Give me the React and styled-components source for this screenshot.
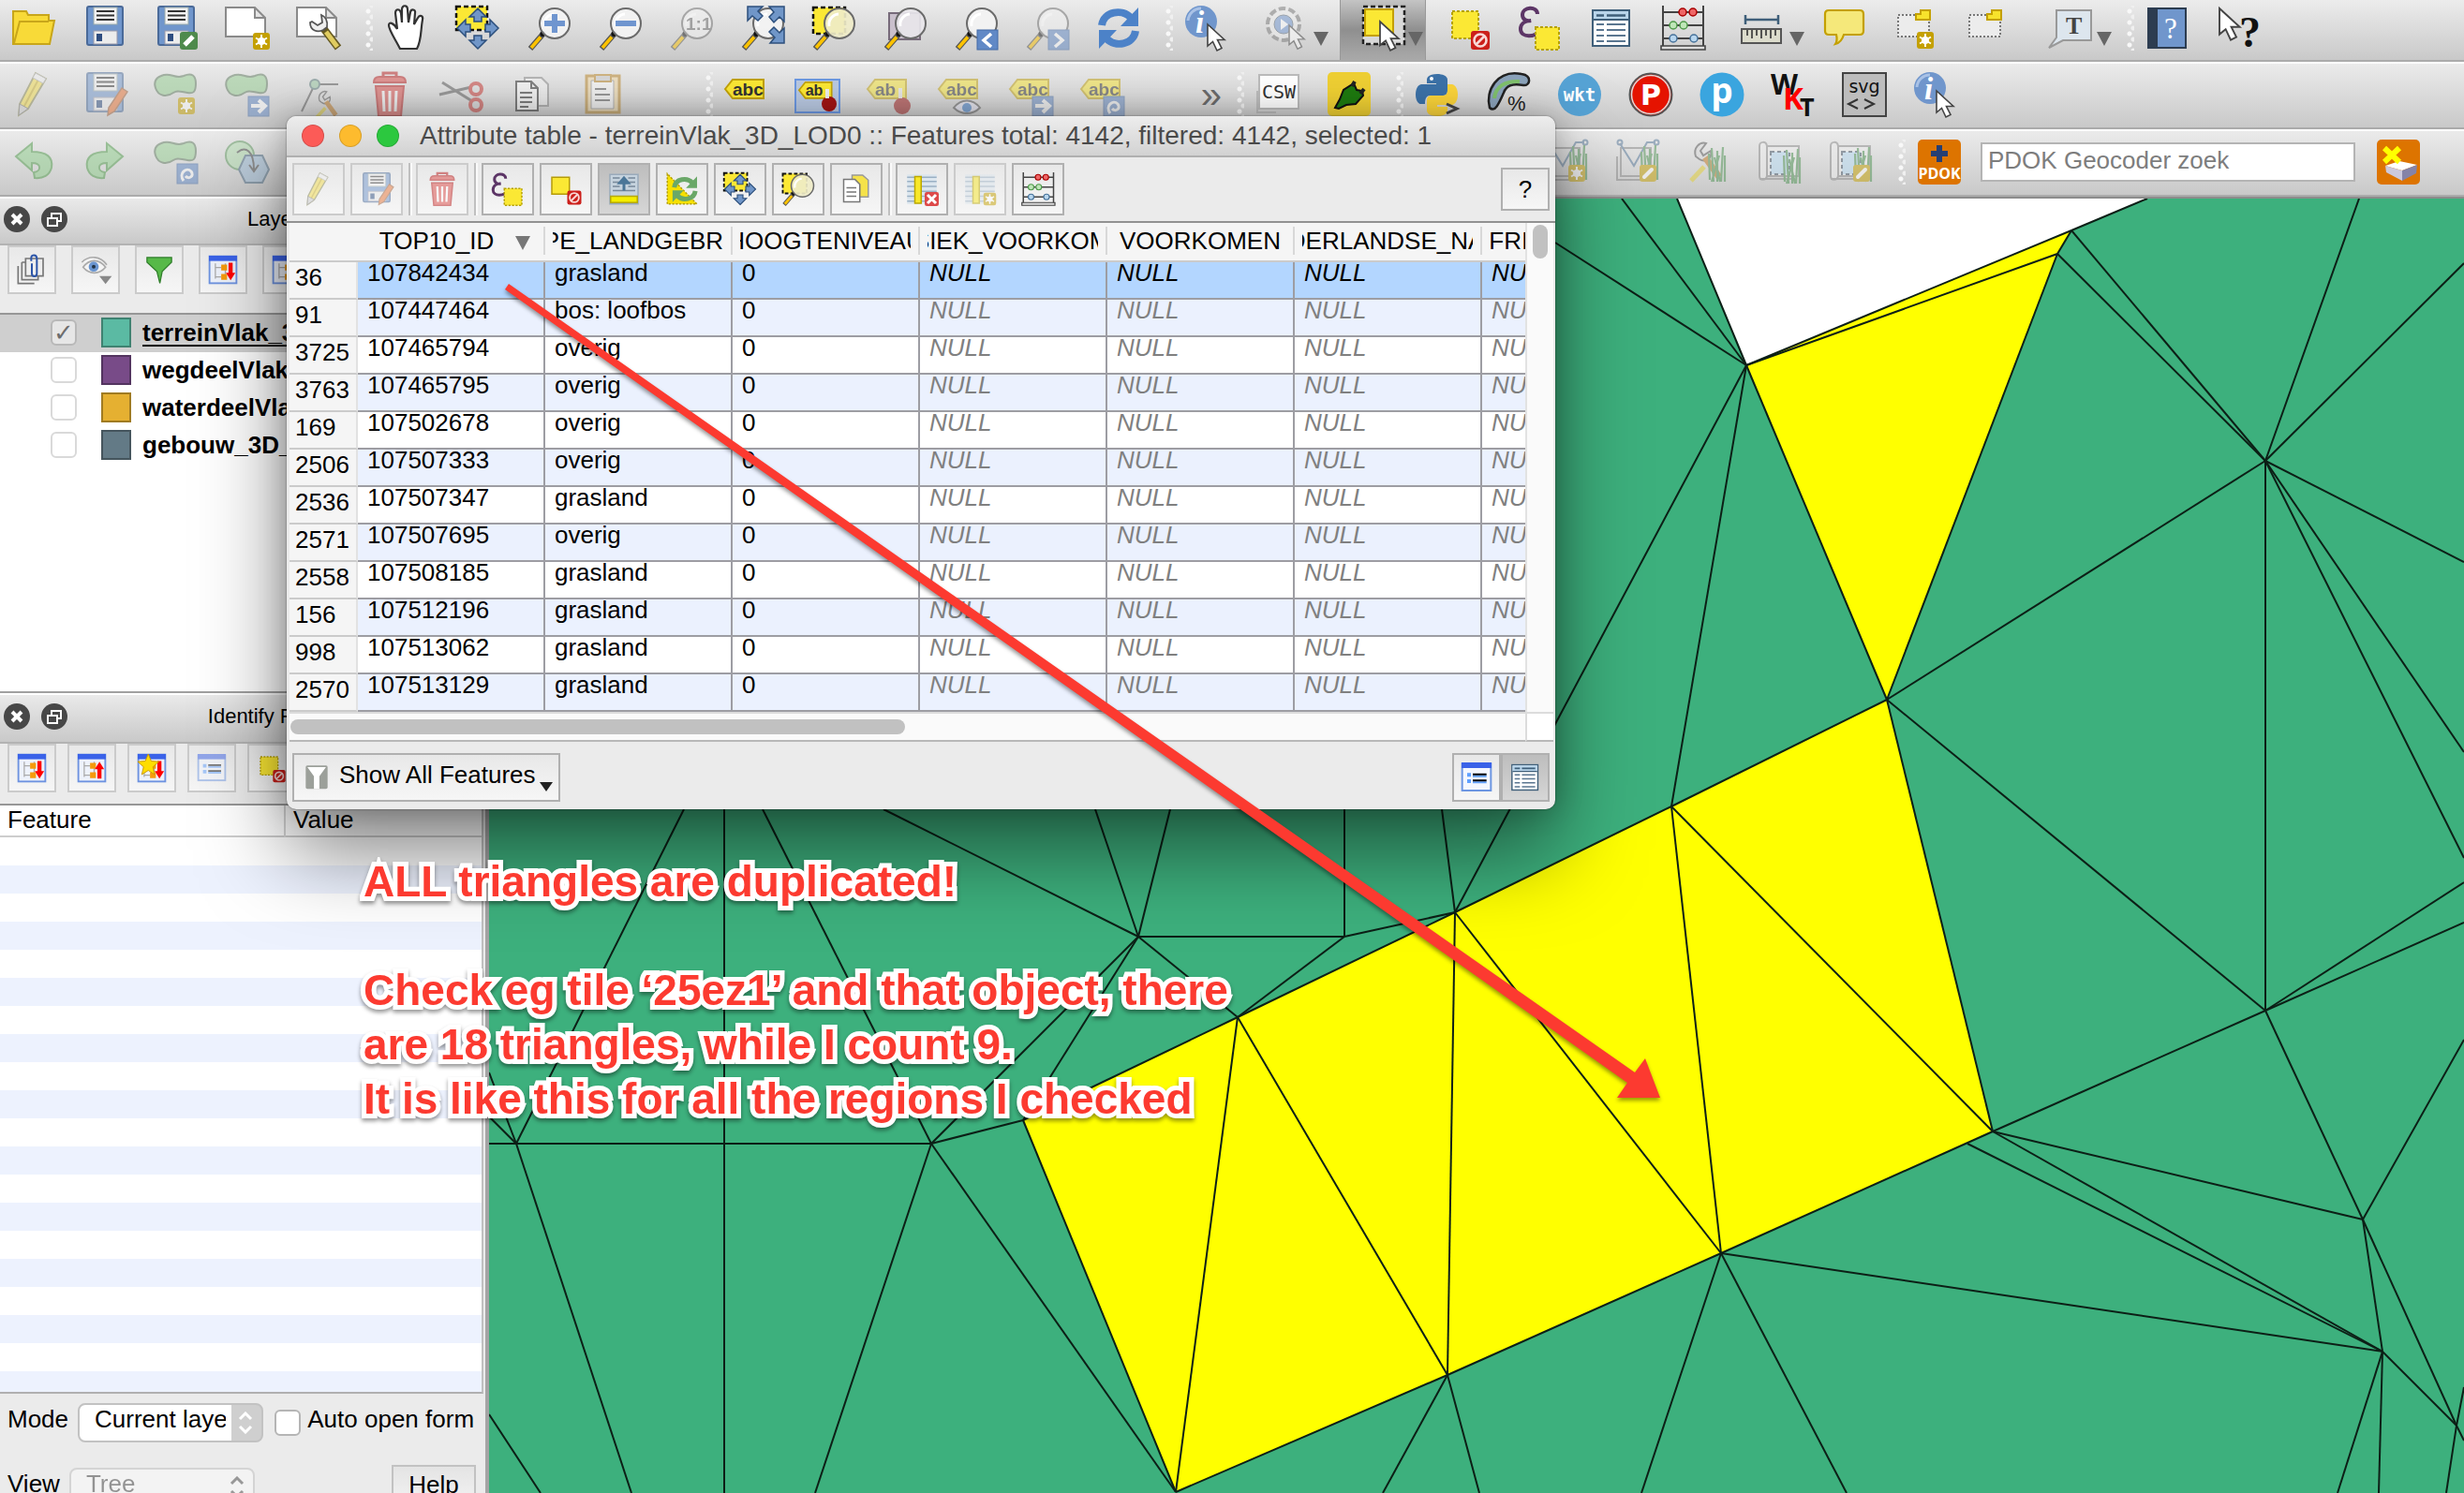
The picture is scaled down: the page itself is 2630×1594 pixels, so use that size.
import React from "react";
import styled, { createGlobalStyle, css } from "styled-components";

const sans = `"Liberation Sans", Arial, Helvetica, sans-serif`;

const GlobalStyle = createGlobalStyle`
  * { box-sizing: border-box; }
  body { margin: 0; font-family: ${sans}; font-size: 26px; color: #000; overflow: hidden; }
  button, input, select { font: inherit; color: inherit; margin: 0; }
`;

/* ---------- icon drawing helpers ---------- */

const Svg = styled.svg`
  display: block;
  flex: none;
  width: ${(p) => p.$size || 48}px;
  height: ${(p) => p.$size || 48}px;
  opacity: ${(p) => (p.$dim ? 0.5 : 1)};
  overflow: visible;
`;

const Star = ({ x = 30, y = 29, edit }) => (
  <g>
    <rect x={x} y={y} width="18" height="18" rx="3" fill="#c4a000" />
    {edit ? (
      <path d={`M${x + 5} ${y + 13}L${x + 13} ${y + 5}`} stroke="#fff" strokeWidth="4" strokeLinecap="round" />
    ) : (
      <g stroke="#fff" strokeWidth="2">
        <path d={`M${x + 9} ${y + 2}v14M${x + 3} ${y + 5.5}l12 7M${x + 15} ${y + 5.5}l-12 7`} />
        <circle cx={x + 9} cy={y + 9} r="3" fill="#fff" />
      </g>
    )}
  </g>
);

const No = ({ x = 26, y = 27 }) => (
  <g>
    <rect x={x} y={y} width="20" height="20" rx="3" fill="#cc1f1a" />
    <circle cx={x + 10} cy={y + 10} r="6.5" fill="none" stroke="#f8d8d6" strokeWidth="2.6" />
    <path d={`M${x + 5} ${y + 15}l10-10`} stroke="#f8d8d6" strokeWidth="2.6" />
  </g>
);

const Arrow = ({ x, y, s = 1 }) => (
  <path
    transform={`translate(${x} ${y}) scale(${s})`}
    d="M0 0v23l5.5-4.5 4.5 9.5 5-2.500-4.500-9h7.500z"
    fill="#fff"
    stroke="#444"
    strokeWidth="1.600"
  />
);

const Lens = ({ fill = "#f3f3f3" }) => (
  <g>
    <path d="M17 31L4 46" stroke="#555" strokeWidth="6" />
    <path d="M15 33.500L5 45" stroke="#fcc200" strokeWidth="3.600" />
    <circle cx="17.500" cy="30" r="3" fill="#111" />
    <circle cx="30" cy="19" r="16" fill={fill} fillOpacity=".92" stroke="#6b6b6b" strokeWidth="2" />
    <path d="M19 22a11 11 0 0 1 10-13" stroke="#fff" strokeWidth="3" fill="none" />
  </g>
);

const FourArrows = () => (
  <g fill="#7096c8" stroke="#2c4f7c" strokeWidth="1.500">
    <path d="M24 3l9 9h-5v5h-8v-5h-5zM24 46l9-9h-5v-5h-8v5h-5zM2 24l9-9v5h5v8h-5v5zM46 24l-9-9v5h-5v8h5v5z" />
  </g>
);

const Disk = () => (
  <g>
    <rect x="5" y="1" width="38" height="41" rx="2" fill="#7096cc" stroke="#4a6a99" strokeWidth="2" />
    <rect x="12" y="2" width="25" height="18" fill="#f2f2f2" stroke="#9aa" />
    <path d="M15 6h19M15 10.500h19M15 15h19" stroke="#333" strokeWidth="2" />
    <rect x="12" y="27" width="25" height="14" fill="#ececec" stroke="#99a" />
    <rect x="15" y="30" width="6" height="8" fill="#2e4d80" />
  </g>
);

const Sheet = () => <path d="M1 2h31l11 11v20H1zM32 2v11h11" fill="#fff" stroke="#8a8a8a" strokeWidth="2" />;

const Blob = () => (
  <path
    d="M8 4c10-5 14 4 24 0 9-4 13 0 13 8 0 10-3 11-9 10-8-1-10-3-15 0-7 5-16 4-19-5C0 11 2 6 8 4z"
    fill="#96d092"
    stroke="#5f7a5f"
    strokeWidth="2"
  />
);

const Badge = ({ x = 25, y = 26, children }) => (
  <g>
    <rect x={x} y={y} width="22" height="21" fill="#6189c6" stroke="#456ba5" />
    {children}
  </g>
);

const Tag = ({ t = "abc" }) => (
  <g>
    <path d="M1 18L9 8h33v20H9z" fill="#fbe834" stroke="#c2a208" strokeWidth="2" />
    <text x="9" y="25" fontSize="19" fontWeight="bold" fill="#333" fontFamily={sans}>{t}</text>
  </g>
);

const Trash = () => (
  <g stroke="#b71c1c" strokeWidth="2" fill="#dc4a46">
    <path d="M17 5V1h14v4" fill="none" strokeWidth="3" />
    <path d="M7 11c0-6 4-6 6-6h22c2 0 6 0 6 6zM9 15h30l-3 32H12z" />
    <path d="M17 20l1 22M24 20v22M31 20l-1 22" stroke="#fff" strokeWidth="3" />
  </g>
);

const Pencil = () => (
  <g>
    <path d="M26 1l11 6-19 32-10 7 1-12z" fill="#f2dd4e" stroke="#8a8a55" strokeWidth="1.800" />
    <path d="M30 6L13 38" stroke="#c9b02c" strokeWidth="2" />
    <path d="M26 1l11 6-3 5-11-6z" fill="#eee" stroke="#aaa" />
    <path d="M9 34l9 5-10 7z" fill="#ccc" stroke="#777" />
  </g>
);

const Abacus = () => (
  <g>
    <path d="M3 0v45M46 0v45M3 7h43M3 21h43M3 35h43" stroke="#444" strokeWidth="2" />
    <path d="M1 43h47v4H1z" fill="#ddd" stroke="#444" strokeWidth="1.600" />
    <g strokeWidth="1.500">
      <circle cx="24" cy="7" r="4" fill="#e66" stroke="#a00" />
      <circle cx="35" cy="7" r="4" fill="#e66" stroke="#a00" />
      <circle cx="14" cy="21" r="4" fill="#bfe6b8" stroke="#4f9a4a" />
      <circle cx="25" cy="21" r="4" fill="#bfe6b8" stroke="#4f9a4a" />
      <circle cx="14" cy="35" r="4" fill="#b8d6ee" stroke="#46729a" />
      <circle cx="36" cy="35" r="4" fill="#b8d6ee" stroke="#46729a" />
    </g>
  </g>
);

const Eps = () => (
  <g>
    <path d="M21 9c0-9-16-8-16 1 0 5 5 7 9 6-6 0-11 3-11 9 0 10 17 9 20 1" fill="none" stroke="#5c3566" strokeWidth="4" />
    <rect x="19" y="23" width="25" height="24" fill="#fbe834" stroke="#b5a108" strokeWidth="2" strokeDasharray="3 2" />
  </g>
);

const Info = () => (
  <g>
    <circle cx="18" cy="17" r="17" fill="#7096cc" />
    <path d="M4 16A14 14 0 0 1 18 3" stroke="#a9c2e6" strokeWidth="3" fill="none" />
    <text x="12" y="29" fontSize="33" fontStyle="italic" fontWeight="bold" fontFamily='"Liberation Serif", serif' fill="#fff">i</text>
    <Arrow x={25} y={20} />
  </g>
);

const TableGrid = () => (
  <g>
    <rect x="4" y="5" width="39" height="38" fill="#fff" stroke="#3f5f7a" strokeWidth="2" />
    <path d="M5 6h37v8H5z" fill="#b8d4ea" />
    <path d="M8 10.500h8M19 10.500h20" stroke="#3f5f7a" strokeWidth="2.500" />
    <path d="M5 15h37" stroke="#3f5f7a" strokeWidth="2" />
    <path d="M8 20h8M19 20h20M8 26h8M19 26h20M8 32h8M19 32h20M8 38h8M19 38h20" stroke="#5a7690" strokeWidth="2" />
  </g>
);

const Tree = ({ up, star, side }) => (
  <g>
    <rect x="1" y="1" width="46" height="46" fill="#eef2fb" stroke="#6e93e0" strokeWidth="3" />
    <rect x="0" y="0" width="48" height="9" fill="#3a62e8" />
    <path d="M11 13v26M11 20h10M11 36h10M28 13v26" stroke="#aaa" strokeWidth="2" fill="none" />
    <path d="M21 15h10v10H21zM21 31h10v10H21z" fill="#f59a0b" />
    {!side && <path d={up ? "M37 42V24" : "M37 12v20"} stroke="#f00" strokeWidth="7" />}
    {!side && <path d={up ? "M29 26h16l-8-13z" : "M29 29h16l-8 13z"} fill="#f00" />}
    {star && <path d="M18 0l5 12 13 1-10 9 3 13-11-7-11 7 3-13-10-9 13-1z" fill="#fd0" stroke="#c90" strokeWidth="1.500" />}
  </g>
);

const Form = () => (
  <g>
    <rect x="1" y="2" width="46" height="43" fill="#f4f7ff" stroke="#6d96e2" strokeWidth="3" />
    <rect x="0" y="0" width="48" height="9" fill="#3a62e8" />
    <path d="M9 20h6M9 30h6" stroke="#5fa0ff" strokeWidth="6" />
    <path d="M18 22h22M18 32h22" stroke="#5fa0ff" strokeWidth="3" />
    <path d="M18 19h22M18 29h22" stroke="#000" strokeWidth="3" />
  </g>
);

const Cycle = ({ c = "#4c82c8" }) => (
  <g fill="none" stroke={c} strokeWidth="8">
    <path d="M6 21C8 6 28 3 37 13" />
    <path d="M42 27C40 42 20 45 11 35" />
    <path d="M45 2v20H26zM3 46V26h19z" fill={c} stroke="none" />
  </g>
);

const Raster = () => (
  <g fill="none" stroke="#8a8a8a" strokeWidth="2">
    <path d="M10 7h34v32H10M10 7c-1-6-8-5-8 0v32c0 5 7 5 8 0V7M2 42h38" fill="#eee" />
    <path d="M14 13h20v24H14z" fill="#b7dcf5" stroke="#456" strokeDasharray="4 3" />
  </g>
);

const Grass = ({ x = 28, y = 8 }) => (
  <g transform={`translate(${x} ${y})`} stroke="#4b9150" strokeWidth="2.200" fill="none">
    <path d="M3 36L2 8M7 38L5 2M11 38V5M15 38L17 1M19 38L19 10M5 38L13 10M14 38L8 12" />
  </g>
);

const Vee = () => (
  <g fill="none" stroke="#888" strokeWidth="2">
    <path d="M6 9h32v30H6zM2 18v25h28" />
    <path d="M5 4l15 24L34 3h9" stroke="#557799" />
    <circle cx="5" cy="3" r="2.500" stroke="#557799" />
    <circle cx="44" cy="3" r="2.500" stroke="#557799" />
  </g>
);

const Hammer = () => (
  <g>
    <path d="M10 18c-3-9 4-16 11-14l-6 8 3 5 8-5c2 8-6 13-12 9z" fill="#ddd" stroke="#555" strokeWidth="2" />
    <path d="M20 19l15 21" stroke="#c07820" strokeWidth="7" />
    <path d="M19 29L5 44" stroke="#e2cf30" strokeWidth="5" />
  </g>
);

const Note = ({ plain }) => (
  <g>
    <rect x="6" y="10" width="33" height="23" fill="#ececec" stroke="#777" strokeWidth="2" strokeDasharray="2 2" />
    <path d="M30 5h10v10H25v-6h5z" fill="#f7e22c" stroke="#c4a000" strokeWidth="2" />
    {!plain && <Star x={26} y={28} />}
  </g>
);

const icons = {
  open: (
    <path d="M2 41V6h14l2 4h22v6h6l-5 25zM3 40l6-23h31" fill="#f8da38" stroke="#c8a61a" strokeWidth="2" />
  ),
  save: <Disk />,
  saveAs: (
    <g>
      <Disk />
      <rect x="28" y="28" width="19" height="19" rx="3" fill="#4e8a4c" />
      <path d="M33 42l9-9" stroke="#fff" strokeWidth="5" />
    </g>
  ),
  newSheet: (<g><Sheet /><Star /></g>),
  composer: (
    <g>
      <Sheet />
      <path d="M29 24l16 21" stroke="#665a22" strokeWidth="8" />
      <path d="M32 28l12 16" stroke="#e0cc60" strokeWidth="5" />
      <path d="M15 18c0 9 8 11 14 8l4-3c1-7-1-11-6-13l1 8-5 3-6-4z" fill="#eee" stroke="#555" strokeWidth="1.800" />
    </g>
  ),
  hand: (
    <path d="M17 46C12 36 5 26 5 21c0-4 5-3 9 4L12 8c0-5 5-5 6 0l1 10V4c0-5 6-5 6 0l1 14 2-11c1-4 6-3 5 1l-1 12 4-7c2-4 6-2 5 2-2 10-1 22-6 31z" fill="#fff" stroke="#333" strokeWidth="2.200" />
  ),
  panSel: (
    <g>
      <path d="M1 1h33v25H1z" fill="#fbe834" stroke="#111" strokeWidth="2.500" strokeDasharray="5 3" />
      <FourArrows />
    </g>
  ),
  zoomIn: (<g><Lens /><path d="M30 9v20M19 19h22" stroke="#6f95cf" strokeWidth="6" /></g>),
  zoomOut: (<g><Lens /><path d="M19 19h22" stroke="#6f95cf" strokeWidth="6" /></g>),
  zoomOne: (
    <g><Lens /><text x="18" y="26" fontSize="19" fontWeight="bold" fill="#666" fontFamily={sans}>1:1</text></g>
  ),
  zoomFull: (
    <g>
      <Lens />
      <path d="M8 1h16l-5 5 5 5-5 5-6-5-5 5zM47 1v16l-5-5-6 6-5-6 5-5-5-6zM47 40V24l-5 5-6-6-5 5 6 6-5 6z" fill="#7096c8" stroke="#2c4f7c" strokeWidth="1.500" />
    </g>
  ),
  zoomSel: (
    <g>
      <path d="M2 2h34v28H2z" fill="#fbe834" stroke="#111" strokeWidth="2.500" strokeDasharray="5 3" />
      <Lens fill="#efecc8" />
    </g>
  ),
  zoomLayer: (
    <g><path d="M7 8h33v28H7z" fill="#c9bfcc" stroke="#776a7a" strokeWidth="2" /><Lens fill="#e8e6ea" /></g>
  ),
  zoomLast: (<g><Lens /><Badge><path d="M40 30l-8 7 8 7" fill="none" stroke="#fff" strokeWidth="3.500" /></Badge></g>),
  zoomNext: (<g><Lens /><Badge><path d="M32 30l8 7-8 7" fill="none" stroke="#fff" strokeWidth="3.500" /></Badge></g>),
  refresh: <Cycle />,
  info: <Info />,
  gear: (
    <g>
      <circle cx="20" cy="20" r="16" fill="#e9e9e9" stroke="#777" strokeWidth="6" strokeDasharray="7 3" />
      <circle cx="20" cy="20" r="15" fill="#eee" />
      <circle cx="20" cy="20" r="10" fill="#6f95d0" stroke="#567" />
      <path d="M17 14v12l8-6z" fill="#fff" />
      <Arrow x={26} y={21} s={0.9} />
    </g>
  ),
  select: (
    <g>
      <rect x="2" y="1" width="44" height="40" fill="#d9d9d9" stroke="#222" strokeWidth="2.500" strokeDasharray="5 3" />
      <rect x="4" y="4" width="30" height="28" fill="#fbe834" stroke="#c4a000" strokeWidth="2" />
      <Arrow x={20} y={17} s={1.1} />
    </g>
  ),
  deselect: (
    <g>
      <rect x="6" y="6" width="28" height="29" fill="#fbe834" stroke="#b5a108" strokeWidth="2" strokeDasharray="3 2" />
      <No />
    </g>
  ),
  unselect: (
    <g>
      <rect x="4" y="7" width="25" height="24" fill="#fbe834" stroke="#b59b08" strokeWidth="2" />
      <No x={26} y={26} />
    </g>
  ),
  eps: <Eps />,
  table: <TableGrid />,
  abacus: <Abacus />,
  measure: (
    <g>
      <path d="M5 10v10M40 10v10M5 15h35" stroke="#3f5f7a" strokeWidth="2.500" />
      <rect x="1" y="25" width="42" height="15" fill="#dcdccc" stroke="#555" strokeWidth="2" />
      <path d="M7 26v6M12 26v9M17 26v6M22 26v9M27 26v6M32 26v9M37 26v6" stroke="#333" strokeWidth="1.600" />
    </g>
  ),
  tip: (
    <path d="M8 5h33c3 0 4 1 4 4v18c0 3-1 4-4 4H24c-2 7-5 9-9 10 2-3 2-6 1-10H8c-3 0-4-1-4-4V9c0-3 1-4 4-4z" fill="#f5e87a" stroke="#c4a000" strokeWidth="2.200" />
  ),
  note: <Note />,
  form: <Note plain />,
  textNote: (
    <g>
      <path d="M9 5h37v32H16L1 45l8-11z" fill="#dde6ee" stroke="#999" strokeWidth="2" />
      <text x="19" y="30" fontSize="26" fill="#444" fontWeight="bold" fontFamily='"Liberation Serif", serif'>T</text>
    </g>
  ),
  book: (
    <g>
      <rect x="3" y="3" width="40" height="42" fill="#7096cc" stroke="#2c3c50" strokeWidth="2" />
      <rect x="3" y="3" width="10" height="42" fill="#2c3c50" />
      <text x="20" y="35" fontSize="31" fill="#fff" fontFamily='"Liberation Serif", serif'>?</text>
    </g>
  ),
  whats: (
    <g>
      <Arrow x={3} y={3} s={1.2} />
      <text x="24" y="44" fontSize="46" fontWeight="bold" fill="#111" fontFamily='"Liberation Serif", serif'>?</text>
    </g>
  ),
  pencil: <Pencil />,
  saveEdit: (
    <g><Disk /><path d="M42 17l6 4-14 21-7 4 1-8z" fill="#e8763a" stroke="#a0603a" strokeWidth="1.500" /></g>
  ),
  addShape: (<g><Blob /><Star x={26} y={27} /></g>),
  moveShape: (<g><Blob /><Badge><path d="M28 36h13M36 30l7 6-7 7" fill="none" stroke="#fff" strokeWidth="4" /></Badge></g>),
  rotShape: (<g><Blob /><Badge><path d="M32 44c-6-8 3-15 8-10 4 5-3 9-6 5" fill="none" stroke="#fff" strokeWidth="3" /></Badge></g>),
  node: (
    <g>
      <path d="M45 13H20L6 42" stroke="#555" strokeWidth="2" fill="none" />
      <circle cx="20" cy="13" r="5" fill="#96c8a0" stroke="#577" strokeWidth="2" />
      <g transform="translate(18 18) scale(.7)"><Hammer /></g>
    </g>
  ),
  trash: <Trash />,
  cut: (
    <g fill="none">
      <path d="M4 11l32 20M1 24l34-8" stroke="#555" strokeWidth="3" />
      <circle cx="40" cy="18" r="6" stroke="#c8322d" strokeWidth="4" />
      <circle cx="40" cy="35" r="6" stroke="#c8322d" strokeWidth="4" />
    </g>
  ),
  copy: (
    <g>
      <path d="M16 6h18l7 7v23H16z" fill="#f5f5f5" stroke="#888" strokeWidth="2" />
      <path d="M7 10h16l7 7v24H7zM23 10v7h7" fill="#fff" stroke="#222" strokeWidth="2" />
      <path d="M11 22h13M11 27h13M11 32h13M11 37h9" stroke="#222" strokeWidth="2" />
    </g>
  ),
  copyRows: (
    <g>
      <path d="M18 4h15l8 7v24H18z" fill="#f5e24a" stroke="#999" strokeWidth="2" />
      <path d="M6 10h16l7 7v25H6z" fill="#fff" stroke="#777" strokeWidth="2" />
      <path d="M10 22h14M10 28h14M10 34h14" stroke="#777" strokeWidth="2" />
    </g>
  ),
  paste: (
    <g>
      <rect x="6" y="4" width="35" height="39" fill="#f4d9a0" stroke="#b88220" strokeWidth="3" />
      <path d="M11 9h24v30H11z" fill="#fff" stroke="#888" />
      <path d="M15 3h17v7H15z" fill="#ccc" stroke="#b88220" strokeWidth="2" />
      <path d="M15 18h12M15 24h16M15 30h16" stroke="#555" strokeWidth="2" />
    </g>
  ),
  label: <Tag />,
  labelPinned: (
    <g>
      <rect x="0" y="8" width="47" height="35" fill="#b9c9e2" stroke="#6c98e2" strokeWidth="2" />
      <g transform="translate(3 4) scale(.85)"><Tag t="ab" /></g>
      <circle cx="36" cy="34" r="8" fill="#a11414" /><path d="M34 28V18" stroke="#eee" strokeWidth="4" />
    </g>
  ),
  labelPin: (<g><Tag t="ab" /><circle cx="38" cy="36" r="9" fill="#a11414" /><path d="M36 28V17" stroke="#eee" strokeWidth="4" /></g>),
  labelEye: (
    <g><Tag /><path d="M17 38c8-10 20-10 28 0-8 8-20 8-28 0z" fill="#eef" stroke="#555" strokeWidth="2" /><circle cx="31" cy="38" r="5" fill="#37c" /></g>
  ),
  labelMove: (<g><Tag /><Badge><path d="M28 36h13M36 30l7 6-7 7" fill="none" stroke="#fff" strokeWidth="4" /></Badge></g>),
  labelRot: (<g><Tag /><Badge><path d="M32 44c-6-8 3-15 8-10 4 5-3 9-6 5" fill="none" stroke="#fff" strokeWidth="3" /></Badge></g>),
  csw: (
    <g>
      <path d="M2 20v23h20" fill="none" stroke="#bbb" strokeWidth="2" />
      <rect x="4" y="3" width="42" height="36" fill="#fff" stroke="#bbb" strokeWidth="2" />
      <text x="25" y="28" textAnchor="middle" fontSize="20" fill="#333" fontFamily='"DejaVu Sans Mono", monospace'>CSW</text>
    </g>
  ),
  plug: (
    <g>
      <rect x="1" y="0" width="46" height="47" rx="5" fill="#efd033" />
      <path d="M9 38l5-9 4-10 11-7 3 7 6 1 1 5-8 9-10 1-8 4z" fill="#1e7a10" stroke="#111" strokeWidth="2" />
      <path d="M27 15l3-5M36 23l4-5" stroke="#222" strokeWidth="4" />
    </g>
  ),
  python: (
    <g>
      <path d="M13 12V8c0-8 22-8 22 0v12c0 3-2 5-5 5H17c-4 0-6 3-6 9H7C-1 34-1 14 7 13h16v-1z" fill="#3c72a8" />
      <path d="M35 13h5c8 2 8 20 0 22H24v2h11v4c0 8-22 8-22 0V30c0-3 2-5 5-5h12c4 0 5-3 5-6z" fill="#fbd43a" />
      <circle cx="18" cy="7" r="2" fill="#fff" />
      <path d="M34 34l11 5-11 5" fill="none" stroke="#444" strokeWidth="3" />
    </g>
  ),
  contour: (
    <g>
      <path d="M4 38C-1 20 12-3 38 2c12 2 9 13 2 12-12-2-18 0-21 8-4 9-9 22-15 16z" fill="#8ba3bb" stroke="#222" strokeWidth="2.500" />
      <path d="M9 28c1-12 11-19 27-18" fill="none" stroke="#7fc06c" strokeWidth="4" />
      <text x="23" y="41" fontSize="22" fill="#222" fontFamily={sans}>%</text>
    </g>
  ),
  wkt: (
    <g><circle cx="24" cy="24" r="23" fill="#56a3d5" /><text x="24" y="31" textAnchor="middle" fontSize="19" fontWeight="bold" fill="#fff" fontFamily='"DejaVu Sans Mono", monospace'>wkt</text></g>
  ),
  pRed: (
    <g>
      <circle cx="24" cy="24" r="22.500" fill="#e51300" stroke="#555" strokeWidth="2" />
      <circle cx="24" cy="24" r="20.500" fill="none" stroke="#ddd" strokeWidth="1.500" />
      <text x="24" y="35" textAnchor="middle" fontSize="30" fontWeight="bold" fill="#fff" fontFamily='"DejaVu Sans", sans-serif'>P</text>
    </g>
  ),
  pBlue: (
    <g><circle cx="24" cy="24" r="23.500" fill="#3aa5df" /><text x="24" y="33" textAnchor="middle" fontSize="37" fontWeight="bold" fill="#fff" fontFamily='"Open Sans", sans-serif'>p</text></g>
  ),
  wktText: (
    <g fontFamily='"Open Sans", sans-serif' fontWeight="bold">
      <text x="0" y="24" fontSize="30" fill="#111">W</text>
      <text x="13" y="40" fontSize="33" fill="#f00">K</text>
      <text x="31" y="47" fontSize="27" fill="#111">T</text>
    </g>
  ),
  svg: (
    <g>
      <rect x="1" y="1" width="46" height="46" fill="#bdbdbd" stroke="#444" strokeWidth="2" />
      <text x="24" y="22" textAnchor="middle" fontSize="19" fill="#111" fontFamily='"DejaVu Sans", sans-serif'>svg</text>
      <path d="M17 29l-10 5 10 5M24 29l10 5-10 5" fill="none" stroke="#333" strokeWidth="2" />
    </g>
  ),
  undo: <path d="M5 18L22 4v9c16 0 23 6 21 17-2 8-9 12-18 11l-1-6c8-1 9-10-2-10v8z" fill="#8fd08c" stroke="#4f9a4a" strokeWidth="2" />,
  redo: <path d="M43 18L26 4v9C10 13 3 19 5 30c2 8 9 12 18 11l1-6c-8-1-9-10 2-10v8z" fill="#8fd08c" stroke="#4f9a4a" strokeWidth="2" />,
  simplify: (
    <g>
      <circle cx="16" cy="17" r="15" fill="#b5e2b2" stroke="#5f9a5f" strokeWidth="2" />
      <path d="M22 17h18l7 15-7 14H22l-7-14z" fill="#9fc0dc" stroke="#4a6a85" strokeWidth="2" />
      <path d="M13 14c9-8 18-2 18 18M26 27l5 7 5-7" fill="none" stroke="#444" strokeWidth="2" />
    </g>
  ),
  grassNew: (<g><Vee /><Grass x={26} y={5} /><Star x={26} y={27} /></g>),
  grassEdit: (<g><Vee /><Grass x={26} y={5} /><Star x={26} y={27} edit /></g>),
  grassTools: (<g><Hammer /><Grass x={22} y={7} /></g>),
  raster: (<g><Raster /><Grass x={26} y={9} /></g>),
  rasterEdit: (<g><Raster /><Grass x={26} y={7} /><Star x={26} y={27} edit /></g>),
  pdok: (
    <g>
      <rect x="1" width="46" height="48" rx="5" fill="#dd7400" />
      <path d="M24 6v18M15 15h18" stroke="#263f73" strokeWidth="6" />
      <text x="24" y="42" textAnchor="middle" fontSize="16" fontWeight="bold" fill="#fff" fontFamily='"Open Sans", sans-serif'>PDOK</text>
    </g>
  ),
  clear: (
    <g>
      <rect x="1" width="46" height="48" rx="5" fill="#dd7400" />
      <path d="M10 28l15-5 19 4-16 6z" fill="#fff" />
      <path d="M10 28l18 5v11L11 35z" fill="#ccc9dd" /><path d="M44 27l-16 6v11l15-8z" fill="#8583a8" />
      <path d="M9 9l16 15M25 9L9 24" stroke="#ff0" strokeWidth="6" />
    </g>
  ),
  moveTop: (
    <g>
      <rect x="4" y="3" width="40" height="42" fill="#c6d3de" stroke="#9ab" strokeWidth="2" />
      <path d="M8 8h10M30 8h10M8 14h10M30 14h10M8 20h10M30 20h10M8 26h32" stroke="#789" strokeWidth="2" />
      <path d="M24 26V12M18 15l6-7 6 7z" stroke="#4b7698" strokeWidth="4" fill="#4b7698" />
      <rect x="5" y="34" width="38" height="9" fill="#f5ee00" stroke="#b5a800" strokeWidth="2" />
    </g>
  ),
  invert: (<g><path d="M3 2v43h42z" fill="#f7e000" stroke="#b5a108" strokeWidth="2" strokeDasharray="3 2" /><g transform="translate(8 4) scale(.83)"><Cycle c="#6aa868" /></g></g>),
  delCol: (
    <g>
      <rect x="3" y="3" width="42" height="42" fill="#dce6ee" />
      <path d="M3 7h42M3 13h42M3 20h42M3 27h42M3 34h42M3 41h42" stroke="#9ab0c4" strokeWidth="2" />
      <rect x="14" y="6" width="9" height="38" fill="#f8e82a" stroke="#bda800" strokeWidth="2" />
      <rect x="28" y="28" width="20" height="20" rx="3" fill="#dd4a4a" /><path d="M32 32l12 12M44 32L32 44" stroke="#fff" strokeWidth="4" />
    </g>
  ),
  addCol: (
    <g>
      <rect x="3" y="3" width="42" height="42" fill="#dce6ee" />
      <path d="M3 7h42M3 13h42M3 20h42M3 27h42M3 34h42M3 41h42" stroke="#9ab0c4" strokeWidth="2" />
      <rect x="14" y="6" width="9" height="38" fill="#f8e82a" stroke="#bda800" strokeWidth="2" />
      <Star x={29} y={29} />
    </g>
  ),
  attach: (
    <g fill="none" stroke="#777" strokeWidth="2.500">
      <path d="M2 18v28h26M8 12h6M8 12v28h26v-6M14 6h28v28H14z" />
      <path d="M24 14v16c0 6 8 6 8 0V6c0-7-9-7-9-1v5" stroke="#2c55a8" strokeWidth="3" />
    </g>
  ),
  eye: (
    <g>
      <path d="M2 12C14 0 32 2 42 16M4 20c10-14 26-14 36 0-10 12-26 12-36 0z" fill="#f4f4f4" stroke="#aaa" strokeWidth="2.500" />
      <circle cx="21" cy="19" r="8" fill="#6a95d0" /><circle cx="21" cy="19" r="3" fill="#234" />
      <path d="M30 34h20L40 47z" fill="#888" />
    </g>
  ),
  filter: <path d="M3 3h42v8L29 27l-4 20-5-20L3 11z" fill="#57b948" stroke="#2f7d2a" strokeWidth="2" />,
  treeDown: <Tree />,
  treeUp: <Tree up />,
  treeSide: <Tree side />,
  treeStar: <Tree star />,
  formView: <Form />,
  funnelGrey: (
    <g><rect x="4" y="2" width="40" height="43" rx="3" fill="#9ca09a" /><path d="M7 5h34L29 22v23H19V22z" fill="#fff" /></g>
  ),
};

const Icon = ({ name, size, dim }) => (
  <Svg viewBox="0 0 48 48" $size={size} $dim={dim} aria-hidden="true">{icons[name]}</Svg>
);

/* ---------- main window ---------- */

const Screen = styled.div`
  position: relative;
  height: 100vh;
  min-height: 800px;
  display: flex;
  flex-direction: column;
  overflow: hidden;
  background: #ebebeb;
`;

const Bar = styled.div`
  flex: none;
  display: flex;
  align-items: center;
  height: ${(p) => (p.$first ? 66 : 72)}px;
  padding-bottom: ${(p) => (p.$first ? 4 : 0)}px;
  background: linear-gradient(#ececec, #c9c9c9);
  border-bottom: 2px solid #ababab;
  box-shadow: ${(p) => (p.$first ? "none" : "inset 0 2px #fff")};
`;

const ToolButton = styled.button`
  flex: none;
  display: flex;
  align-items: center;
  gap: 4px;
  width: ${(p) => (p.$wide ? 86 : 76)}px;
  height: 48px;
  margin-left: ${(p) => p.$lead || 0}px;
  padding: 0 0 0 12px;
  border: 0;
  background: none;
  ${(p) =>
    p.$pressed &&
    css`
      align-self: stretch;
      width: 92px;
      height: 64px;
      margin: 0 10px 0 6px;
      padding: 0 0 4px 22px;
      gap: 2px;
      background: linear-gradient(#c4c4c4, #8f8f8f 50%, #aaa);
      border: solid #999;
      border-width: 0 1px;
    `}
`;

const Caret = styled.span`
  flex: none;
  margin-top: 22px;
  border: 8px solid transparent;
  border-top: 15px solid #666;
  border-bottom: 0;
`;

const Grip = styled.span`
  flex: none;
  width: 18px;
  height: 48px;
  background:
    radial-gradient(circle, #f8f8f8 2px, transparent 3px) 9px 0 / 8px 12px repeat-y,
    radial-gradient(circle, #f0f0f0 2px, transparent 3px) 13px 6px / 8px 12px repeat-y;
`;

const Space = styled.span`
  flex: 0 0 ${(p) => p.$w}px;
  text-align: right;
  color: #6b6b6b;
  font-size: 40px;
  line-height: 48px;
  padding-right: 6px;
`;

const Search = styled.input`
  width: 400px;
  height: 42px;
  margin: 0 10px 0 4px;
  padding: 0 6px 4px;
  border: 2px solid #b4b4b4;
  background: #fff;
  outline: 0;
  &::placeholder { color: #7d7d7d; opacity: 1; }
`;

const Workspace = styled.div`
  flex: 1;
  min-height: 0;
  display: flex;
`;

const Dock = styled.aside`
  flex: 0 0 522px;
  display: flex;
  flex-direction: column;
  min-height: 0;
  border-right: 4px solid #a4a4a4;
  padding-right: 2px;
`;

const DockTitle = styled.h2`
  flex: none;
  display: flex;
  align-items: center;
  gap: 12px;
  height: ${(p) => (p.$second ? 56 : 52)}px;
  margin: 0;
  padding: 0 6px 2px 4px;
  font-size: 22px;
  font-weight: normal;
  background: linear-gradient(#ebebeb, #c9c9c9);
  border-bottom: 2px solid #b3b3b3;
  box-shadow: inset 0 2px #fff;
  ${(p) => p.$second && css`border-top: 2px solid #a0a0a0;`}
  span { flex: 1; text-align: center; }
`;

const RoundButton = styled.button`
  width: 28px;
  height: 28px;
  padding: 0;
  border: 0;
  border-radius: 50%;
  background: #474747;
  svg { display: block; }
`;

const DockTools = styled.div`
  flex: none;
  display: flex;
  gap: ${(p) => p.$gap}px;
  height: ${(p) => p.$h}px;
  padding-left: 8px;
  overflow: hidden;
  background: #ebebeb;
  border-bottom: 2px solid #979797;
`;

const BoxButton = styled.button`
  flex: none;
  display: flex;
  align-items: center;
  justify-content: center;
  width: ${(p) => p.$w || 52}px;
  height: ${(p) => p.$h || 52}px;
  padding: 0;
  border: 2px solid ${(p) => (p.$soft ? "#cbcbcb" : "#b0b0b0")};
  background: ${(p) => (p.$on ? "linear-gradient(#bdbdbd, #d6d6d6)" : "linear-gradient(#e8e8e8, #f6f6f6)")};
`;

const Layers = styled.ul`
  flex: 0 0 402px;
  margin: 0;
  padding: 0;
  list-style: none;
  background: #fff;
`;

const Layer = styled.li`
  height: 40px;
  background: ${(p) => (p.$on ? "#cfcfcf" : "none")};
  label {
    display: flex;
    align-items: center;
    height: 38px;
    padding-left: 54px;
    font-weight: bold;
    white-space: nowrap;
  }
  b {
    text-decoration: ${(p) => (p.$on ? "underline" : "none")};
    text-decoration-thickness: 2px;
    text-underline-offset: 4px;
  }
`;

const Tick = styled.input`
  appearance: none;
  flex: none;
  width: 28px;
  height: 28px;
  border: 2px solid ${(p) => (p.$strong ? "#b5b5b5" : "#d9d9d9")};
  border-radius: 6px;
  background: #fff;
  display: grid;
  place-items: center;
  &:checked { background: #e6e6e6; border-color: #b8b8b8; }
  &:checked::after { content: "✓"; color: #6d6d6d; font: 26px/20px "DejaVu Sans", sans-serif; }
`;

const Swatch = styled.span`
  width: 32px;
  height: 32px;
  margin: 0 12px 0 26px;
  border: 2px solid rgba(0, 0, 0, 0.3);
  background: ${(p) => p.$c};
`;

const Results = styled.div`
  flex: 1;
  min-height: 0;
  background: repeating-linear-gradient(#fff 0 30px, #edf2fe 30px 60px) 0 34px;
  border-right: 2px solid #c0c0c0;
  border-bottom: 2px solid #b0b0b0;
  overflow: hidden;
`;

const ResultHead = styled.table`
  width: 100%;
  height: 34px;
  table-layout: fixed;
  border-collapse: collapse;
  background: #fff;
  border-bottom: 2px solid #cdcdcd;
  th {
    padding: 0 0 2px 8px;
    font-weight: normal;
    text-align: left;
    line-height: 30px;
  }
  th:first-child { width: 304px; border-right: 2px solid #d5d5d5; }
`;

const Options = styled.div`
  flex: 0 0 106px;
  padding: 10px 8px 0;
  overflow: hidden;
`;

const OptionRow = styled.div`
  display: flex;
  align-items: center;
  height: 42px;
  margin-bottom: ${(p) => p.$gap || 0}px;
  white-space: nowrap;
  label { padding-bottom: 8px; }
`;

const Picker = styled.span`
  position: relative;
  flex: none;
  width: 198px;
  height: 42px;
  margin: 0 12px 0 10px;
  border: 2px solid #c2c2c2;
  border-radius: 8px;
  overflow: hidden;
  opacity: ${(p) => (p.$off ? 0.55 : 1)};
  background: ${(p) => (p.$off ? "#fafafa" : "linear-gradient(90deg, #fff 162px, #cfcfcf 162px)")};
  select {
    appearance: none;
    width: 100%;
    height: 38px;
    padding: 0 38px 8px 16px;
    border: 0;
    background: none;
    text-overflow: clip;
  }
  svg { position: absolute; right: 8px; top: 7px; }
`;

const HelpButton = styled.button`
  width: 90px;
  height: 48px;
  margin-left: auto;
  padding: 0 0 6px;
  border: 2px solid #c2c2c2;
  background: linear-gradient(#e4e4e4, #f4f4f4);
`;

const MapPane = styled.main`
  flex: 1;
  min-width: 0;
  background: #3db07d;
  border-top: 2px solid #8c8c8c;
  > svg { display: block; width: 100%; height: 100%; }
`;

/* ---------- attribute table window ---------- */

const Dialog = styled.section`
  position: absolute;
  left: 306px;
  top: 124px;
  width: 1354px;
  display: flex;
  flex-direction: column;
  border-radius: 10px;
  background: #ebebeb;
  box-shadow: 0 0 2px rgba(0, 0, 0, 0.5), 0 44px 90px rgba(0, 0, 0, 0.5), 0 0 30px rgba(0, 0, 0, 0.22);
  overflow: hidden;
`;

const TitleBar = styled.header`
  display: flex;
  align-items: center;
  gap: 16px;
  height: 44px;
  padding-left: 16px;
  background: linear-gradient(#ededed, #d2d2d2);
  border-bottom: 2px solid #b0b0b0;
  color: #4a4a4a;
  h1 { margin: 0 0 0 6px; font-size: 28px; font-weight: normal; white-space: nowrap; }
`;

const Light = styled.button`
  width: 24px;
  height: 24px;
  padding: 0;
  border: 1px solid rgba(0, 0, 0, 0.15);
  border-radius: 50%;
  background: ${(p) => p.$c};
`;

const DialogTools = styled.div`
  display: flex;
  align-items: center;
  gap: 6px;
  height: 70px;
  padding: 0 6px;
  border-bottom: 2px solid #929292;
`;

const Rule = styled.span`
  width: 2px;
  height: 56px;
  background: #c0c0c0;
  box-shadow: 2px 0 #fafafa;
`;

const Push = styled.span`
  margin-left: auto;
`;

const Sheeted = styled.div`
  display: grid;
  grid-template-columns: 1fr 30px;
  padding: 0 2px 0 3px;
`;

const TableClip = styled.div`
  overflow: hidden;
  background: #fff;
`;

const Grid = styled.table`
  width: 1473px;
  table-layout: fixed;
  border-collapse: separate;
  border-spacing: 0;
  thead th {
    height: 42px;
    padding: 0 0 2px;
    font-weight: normal;
    background: #f5f5f5;
    border-bottom: 2px solid #cbcbcb;
  }
  thead th:first-child { width: 73px; }
`;

const HeadLabel = styled.span`
  display: flex;
  height: 30px;
  padding: ${(p) => (p.$sorted ? "0 8px 0 0" : "0 8px")};
  border-right: 2px solid #d8d8d8;
  line-height: 30px;
  span { display: flex; justify-content: center; width: 100%; overflow: hidden; white-space: nowrap; }
  b { font-weight: normal; flex: none; }
`;

const SortMark = styled.i`
  flex: none;
  align-self: center;
  margin: 4px 6px 0 0;
  border: 8px solid transparent;
  border-top: 15px solid #777;
  border-bottom: 0;
`;

const Row = styled.tr`
  background: ${(p) => (p.$on ? "#b3d6ff" : p.$alt ? "#ebf1fe" : "#fff")};
  th, td {
    height: 40px;
    padding: 0 0 0 10px;
    vertical-align: top;
    text-align: left;
    font-weight: normal;
    line-height: 22px;
    white-space: nowrap;
    overflow: hidden;
  }
  td { border-right: 2px solid #9d9da3; border-bottom: 2px solid #9d9da3; }
  th {
    padding-left: 6px;
    line-height: 32px;
    background: #f5f5f5;
    border-bottom: 2px solid #cbcbcb;
    border-right: 2px solid #e2e2e2;
  }
  em { color: ${(p) => (p.$on ? "#000" : "#808080")}; }
`;

const VTrack = styled.div`
  background: #fafafa;
  border-left: 2px solid #e2e2e2;
  padding: 2px 6px;
  &::before { content: ""; display: block; width: 16px; height: 36px; border-radius: 8px; background: #c1c1c1; }
`;

const HTrack = styled.div`
  height: 32px;
  padding: 6px 1px;
  background: #fafafa;
  border-top: 2px solid #dcdcdc;
  border-bottom: 2px solid #b8b8b8;
  &::before { content: ""; display: block; width: 656px; height: 16px; border-radius: 8px; background: #c1c1c1; }
`;

const Corner = styled.div`
  background: #fff;
  border: solid #dcdcdc;
  border-width: 2px 0 2px 2px;
  border-bottom-color: #b8b8b8;
`;

const Footer = styled.footer`
  display: flex;
  align-items: center;
  height: 72px;
  padding: 4px 6px 0;
`;

const FilterButton = styled.button`
  display: flex;
  align-items: center;
  width: 286px;
  height: 52px;
  padding: 0 4px 0 10px;
  gap: 10px;
  border: 2px solid #b0b0b0;
  background: linear-gradient(#e8e8e8, #f6f6f6);
  white-space: nowrap;
  span { padding-bottom: 6px; }
  i { margin: 20px 0 0 -6px; border: 7px solid transparent; border-top: 10px solid #222; border-bottom: 0; }
`;

/* ---------- annotations over the screen ---------- */

const Remark = styled.p`
  position: absolute;
  left: 388px;
  top: 912px;
  margin: 0;
  font-size: 46px;
  font-weight: bold;
  line-height: 58px;
  white-space: pre;
  color: #fc3a30;
  -webkit-text-stroke: 10px #fff;
  paint-order: stroke fill;
  stroke-linejoin: round;
  filter: drop-shadow(0 3px 2px rgba(0, 0, 0, 0.4));
`;

const Pointer = styled.svg`
  position: absolute;
  left: 530px;
  top: 290px;
  width: 1260px;
  height: 900px;
  pointer-events: none;
  filter: drop-shadow(0 3px 2px rgba(0, 0, 0, 0.4));
`;

/* ---------- data ---------- */

const P = {
  A: [1864, 390], B: [2211, 246], C: [2196, 271], D: [2014, 747], E: [1784, 861], F: [1837, 1338],
  G: [2127, 1208], H: [2418, 492], I: [2418, 1079], J: [2522, 1302], K: [2543, 1443], L: [2622, 1522],
  M: [1553, 974], N: [1321, 1086], O: [1092, 1196], P: [1255, 1593], Q: [1545, 1468], R: [1215, 1000],
  S: [1435, 1000], T: [994, 1221], U: [551, 1221],
};

const links = [
  "AE", "BH", "CH", "HI", "DH", "DI", "IG", "IJ", "JK", "JL", "KL", "GJ", "GK", "FK", "AM", "AC", "CD", "AD", "AB", "BC",
  "ED", "ME", "NM", "ON", "OP", "PQ", "QF", "FG", "DG", "EF", "EG", "MF", "MQ", "NP", "NQ", "RS", "SM", "SN", "RN", "RT",
  "RO", "TO", "TU", "TP",
];

const rays = [
  ["A", 1731, 212], ["A", 1660, 259], ["A", 1790, 212], ["B", 2292, 212], ["H", 2518, 212], ["H", 2630, 281],
  ["H", 2630, 600], ["H", 2630, 803], ["H", 2630, 916], ["I", 2630, 942], ["I", 2630, 985], ["J", 2630, 1110],
  ["K", 2100, 1221], ["F", 1752, 1594], ["F", 1971, 1594], ["K", 2495, 1594], ["K", 2539, 1594], ["L", 2630, 1481],
  ["L", 2611, 1594], ["L", 2630, 1538], ["S", 1435, 860], ["R", 943, 864], ["R", 1169, 864], ["R", 1249, 864],
  ["M", 1539, 864], ["T", 814, 864], ["T", 870, 1594], ["U", 730, 864], ["U", 522, 1145], ["U", 522, 1192],
  ["U", 522, 1221], ["U", 674, 1594], ["Q", 1476, 1594], ["Q", 1579, 1594],
];

const poly = (keys) => keys.split("").map((k) => P[k].join(",")).join(" ");

const TriangleMap = () => (
  <svg viewBox="522 212 2108 1382" preserveAspectRatio="xMinYMin slice" role="img" aria-label="Map of terrain triangles">
    <rect x="522" y="212" width="2108" height="1382" fill="#3db07d" />
    <polygon points={`1790,212 ${P.A} ${P.B} 2292,212`} fill="#fff" />
    <polygon points={poly("ABCD")} fill="#ff0" />
    <polygon points={poly("ONMEDGFQP")} fill="#ff0" />
    <g stroke="#0c1f16" strokeWidth="2" fill="none">
      {links.map((l) => (
        <path key={l} d={`M${P[l[0]]}L${P[l[1]]}`} />
      ))}
      {rays.map(([k, x, y], i) => (
        <path key={i} d={`M${P[k]}L${x},${y}`} />
      ))}
      <path d="M773 212V1594M522 1510L577 1594" />
    </g>
  </svg>
);

const rows = [
  [36, "107842434", "grasland"], [91, "107447464", "bos: loofbos"], [3725, "107465794", "overig"],
  [3763, "107465795", "overig"], [169, "107502678", "overig"], [2506, "107507333", "overig"],
  [2536, "107507347", "grasland"], [2571, "107507695", "overig"], [2558, "107508185", "grasland"],
  [156, "107512196", "grasland"], [998, "107513062", "grasland"], [2570, "107513129", "grasland"],
];

const columns = ["TYPE_LANDGEBRUIK", "HOOGTENIVEAU", "FYSIEK_VOORKOMEN", "VOORKOMEN", "NEDERLANDSE_NAAM", "FRIESE_NAAM"];

const layers = [
  ["terreinVlak_3D_LOD0", "#5bbaa3", true], ["wegdeelVlak_3D_LOD0", "#784b88"],
  ["waterdeelVlak_3D_LOD0", "#e5b031"], ["gebouw_3D_LOD0", "#637a86"],
];

const Tools = ({ items }) =>
  items.map(([name, label, dim]) => (
    <ToolButton key={label} type="button" aria-label={label}>
      <Icon name={name} dim={dim} />
    </ToolButton>
  ));

const DialogTool = ({ name, label, soft, on }) => (
  <BoxButton type="button" aria-label={label} $w={56} $h={56} $soft={soft} $on={on}>
    <Icon name={name} size={36} dim={soft} />
  </BoxButton>
);

const DockHeading = ({ children, second }) => (
  <DockTitle $second={second}>
    <RoundButton type="button" aria-label={`Close ${children}`}>
      <svg width="28" height="28" viewBox="0 0 28 28"><path d="M9 9l10 10M19 9L9 19" stroke="#fff" strokeWidth="4" /></svg>
    </RoundButton>
    <RoundButton type="button" aria-label={`Float ${children}`}>
      <svg width="28" height="28" viewBox="0 0 28 28" fill="none" stroke="#fff" strokeWidth="2"><path d="M7 13h10v8H7zM11 12V8h10v8h-3" /></svg>
    </RoundButton>
    <span>{children}</span>
  </DockTitle>
);

const UpDown = ({ c }) => (
  <svg width="18" height="24" viewBox="0 0 18 24" fill="none" stroke={c} strokeWidth="3" aria-hidden="true">
    <path d="M3 8l6-6 6 6M3 16l6 6 6-6" />
  </svg>
);

export default function App() {
  return (
    <Screen>
      <GlobalStyle />
      <Bar $first role="toolbar" aria-label="Project and navigation">
        <Tools items={[["open", "Open project"], ["save", "Save project"], ["saveAs", "Save project as"], ["newSheet", "New composer"], ["composer", "Composer manager"]]} />
        <Grip />
        <Tools
          items={[
            ["hand", "Pan"], ["panSel", "Pan to selection"], ["zoomIn", "Zoom in"], ["zoomOut", "Zoom out"],
            ["zoomOne", "Native resolution", true], ["zoomFull", "Zoom full"], ["zoomSel", "Zoom to selection"],
            ["zoomLayer", "Zoom to layer"], ["zoomLast", "Zoom last"], ["zoomNext", "Zoom next", true], ["refresh", "Refresh"],
          ]}
        />
        <Grip />
        <Tools items={[["info", "Identify features"]]} />
        <ToolButton type="button" aria-label="Run action" $wide $lead={10}><Icon name="gear" dim /><Caret /></ToolButton>
        <ToolButton type="button" aria-label="Select features" $pressed><Icon name="select" /><Caret /></ToolButton>
        <Tools items={[["deselect", "Deselect all"], ["eps", "Select by expression"], ["table", "Open attribute table"], ["abacus", "Field calculator"]]} />
        <ToolButton type="button" aria-label="Measure" $wide $lead={10}><Icon name="measure" /><Caret /></ToolButton>
        <Tools items={[["tip", "Map tips"], ["note", "New bookmark"], ["form", "Show bookmarks"]]} />
        <ToolButton type="button" aria-label="Text annotation" $wide $lead={14}><Icon name="textNote" /><Caret /></ToolButton>
        <Grip />
        <Tools items={[["book", "Help contents"], ["whats", "What's this"]]} />
      </Bar>

      <Bar role="toolbar" aria-label="Digitizing, labels and plugins">
        <Tools
          items={[
            ["pencil", "Toggle editing", true], ["saveEdit", "Save edits", true], ["addShape", "Add feature", true],
            ["moveShape", "Move feature", true], ["node", "Node tool", true], ["trash", "Delete selected", true],
            ["cut", "Cut features", true], ["copy", "Copy features", true], ["paste", "Paste features", true],
          ]}
        />
        <Space $w={59} />
        <Grip />
        <Tools
          items={[
            ["label", "Layer labeling"], ["labelPinned", "Highlight pinned labels"], ["labelPin", "Pin labels", true],
            ["labelEye", "Show or hide labels", true], ["labelMove", "Move label", true], ["labelRot", "Rotate label", true],
          ]}
        />
        <Space $w={93}>»</Space>
        <Grip />
        <Tools items={[["csw", "CSW client"], ["plug", "Plugin"]]} />
        <Grip />
        <Tools
          items={[
            ["python", "Python console"], ["contour", "Contour"], ["wkt", "WKT"], ["pRed", "Plugin P"],
            ["pBlue", "Plugin p"], ["wktText", "Get WKT"], ["svg", "SVG export"], ["info", "Identify plugin"],
          ]}
        />
      </Bar>

      <Bar role="toolbar" aria-label="Advanced digitizing and geocoder">
        <Tools items={[["undo", "Undo", true], ["redo", "Redo", true], ["rotShape", "Rotate feature", true], ["simplify", "Simplify feature", true]]} />
        <Space $w={1332} />
        <Tools
          items={[
            ["grassNew", "New mapset", true], ["grassEdit", "Edit vector", true], ["grassTools", "Open tools", true],
            ["raster", "Display region", true], ["rasterEdit", "Edit region", true],
          ]}
        />
        <Grip />
        <Tools items={[["pdok", "PDOK services"]]} />
        <Search aria-label="PDOK Geocoder zoek" placeholder="PDOK Geocoder zoek" />
        <Tools items={[["clear", "Clear geocoder"]]} />
      </Bar>

      <Workspace>
        <Dock>
          <DockHeading>Layers</DockHeading>
          <DockTools $gap={16} $h={74}>
            <BoxButton type="button" aria-label="Add group" $soft><Icon name="attach" size={32} /></BoxButton>
            <BoxButton type="button" aria-label="Manage visibility" $soft><Icon name="eye" size={32} /></BoxButton>
            <BoxButton type="button" aria-label="Filter legend" $soft><Icon name="filter" size={30} /></BoxButton>
            <BoxButton type="button" aria-label="Expand all" $soft><Icon name="treeDown" size={30} /></BoxButton>
            <BoxButton type="button" aria-label="Collapse all" $soft><Icon name="treeSide" size={30} /></BoxButton>
          </DockTools>
          <Layers>
            {layers.map(([name, color, on]) => (
              <Layer key={name} $on={on}>
                <label>
                  <Tick type="checkbox" defaultChecked={on} />
                  <Swatch $c={color} />
                  <b>{name}</b>
                </label>
              </Layer>
            ))}
          </Layers>
          <DockHeading second>Identify Results</DockHeading>
          <DockTools $gap={12} $h={66}>
            <BoxButton type="button" aria-label="Expand tree" $soft><Icon name="treeDown" size={30} /></BoxButton>
            <BoxButton type="button" aria-label="Collapse tree" $soft><Icon name="treeUp" size={30} /></BoxButton>
            <BoxButton type="button" aria-label="Expand new results" $soft><Icon name="treeStar" size={30} /></BoxButton>
            <BoxButton type="button" aria-label="Open form" $soft><Icon name="formView" size={30} dim /></BoxButton>
            <BoxButton type="button" aria-label="Clear results" $soft><Icon name="deselect" size={32} /></BoxButton>
          </DockTools>
          <Results>
            <ResultHead>
              <thead><tr><th scope="col">Feature</th><th scope="col">Value</th></tr></thead>
            </ResultHead>
          </Results>
          <Options>
            <OptionRow $gap={27}>
              <label htmlFor="mode">Mode</label>
              <Picker>
                <select id="mode" defaultValue="layer"><option value="layer">Current layer</option></select>
                <UpDown c="#fff" />
              </Picker>
              <Tick id="auto" type="checkbox" $strong />
              <label htmlFor="auto">&nbsp;Auto open form</label>
            </OptionRow>
            <OptionRow>
              <label htmlFor="view">View</label>
              <Picker $off>
                <select id="view" disabled defaultValue="tree"><option value="tree">Tree</option></select>
                <UpDown c="#555" />
              </Picker>
              <HelpButton type="button">Help</HelpButton>
            </OptionRow>
          </Options>
        </Dock>
        <MapPane><TriangleMap /></MapPane>
      </Workspace>

      <Dialog aria-label="Attribute table">
        <TitleBar>
          <Light type="button" aria-label="Close" $c="#fc5b57" />
          <Light type="button" aria-label="Minimise" $c="#fdbb2e" />
          <Light type="button" aria-label="Zoom window" $c="#2cc83f" />
          <h1>Attribute table - terreinVlak_3D_LOD0 :: Features total: 4142, filtered: 4142, selected: 1</h1>
        </TitleBar>
        <DialogTools>
          <DialogTool name="pencil" label="Toggle editing mode" soft />
          <DialogTool name="saveEdit" label="Save table edits" soft />
          <Rule />
          <DialogTool name="trash" label="Delete selected features" soft />
          <Rule />
          <DialogTool name="eps" label="Select features by expression" />
          <DialogTool name="unselect" label="Unselect all" />
          <DialogTool name="moveTop" label="Move selection to top" on />
          <DialogTool name="invert" label="Invert selection" />
          <DialogTool name="panSel" label="Pan map to selected rows" />
          <DialogTool name="zoomSel" label="Zoom map to selected rows" />
          <DialogTool name="copyRows" label="Copy selected rows" />
          <Rule />
          <DialogTool name="delCol" label="Delete column" />
          <DialogTool name="addCol" label="New column" soft />
          <DialogTool name="abacus" label="Open field calculator" />
          <Push><BoxButton type="button" $h={46}>?</BoxButton></Push>
        </DialogTools>
        <Sheeted>
          <TableClip>
            <Grid>
              <thead>
                <tr>
                  <th aria-label="Row" />
                  <th scope="col"><HeadLabel $sorted><span><b>TOP10_ID</b></span><SortMark /></HeadLabel></th>
                  {columns.map((c) => (
                    <th key={c} scope="col"><HeadLabel><span><b>{c}</b></span></HeadLabel></th>
                  ))}
                </tr>
              </thead>
              <tbody>
                {rows.map(([n, id, use], i) => (
                  <Row key={n} $on={i === 0} $alt={i % 2 === 1}>
                    <th scope="row">{n}</th>
                    <td>{id}</td>
                    <td>{use}</td>
                    <td>0</td>
                    <td><em>NULL</em></td>
                    <td><em>NULL</em></td>
                    <td><em>NULL</em></td>
                    <td><em>NULL</em></td>
                  </Row>
                ))}
              </tbody>
            </Grid>
          </TableClip>
          <VTrack />
          <HTrack />
          <Corner />
        </Sheeted>
        <Footer>
          <FilterButton type="button"><Icon name="funnelGrey" size={28} /><span>Show All Features</span><i /></FilterButton>
          <Push />
          <BoxButton type="button" aria-label="Form view"><Icon name="formView" size={32} /></BoxButton>
          <BoxButton type="button" aria-label="Table view" $on><Icon name="table" size={34} /></BoxButton>
        </Footer>
      </Dialog>

      <Remark>{"ALL triangles are duplicated!\n\nCheck eg tile ‘25ez1’ and that object, there\nare 18 triangles, while I count 9.\nIt is like this for all the regions I checked"}</Remark>
      <Pointer viewBox="530 290 1260 900" aria-hidden="true">
        <polygon points="543,303 1745,1145 1756,1130 1772,1172 1726,1172 1737,1156 539,309" fill="#fc3a30" />
      </Pointer>
    </Screen>
  );
}
